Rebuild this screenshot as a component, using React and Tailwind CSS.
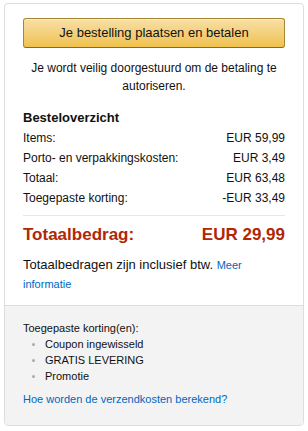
import React from 'react';

const rows = [
  { label: 'Items:', value: 'EUR 59,99' },
  { label: 'Porto- en verpakkingskosten:', value: 'EUR 3,49' },
  { label: 'Totaal:', value: 'EUR 63,48' },
  { label: 'Toegepaste korting:', value: '-EUR 33,49' },
];

const discounts = ['Coupon ingewisseld', 'GRATIS LEVERING', 'Promotie'];

const App = () => {
  return (
    <div className="pl-[4px] pt-[3px] font-['Liberation_Sans',Arial,sans-serif] text-[#111]">
      <div className="w-[300px] rounded-[4px] border border-[#dddddd] bg-white">
        {/* bestelling plaatsen */}
        <div className="px-[18px] pt-[14px] pb-[12px]">
          <button className="block h-[30px] w-full rounded-[3px] border border-[#a88734] border-b-[#846a29] bg-gradient-to-b from-[#f7dfa5] to-[#f0c14b] text-[13px] leading-[28px] text-[#111] shadow-[inset_0_1px_0_rgba(255,255,255,0.4)]">
            Je bestelling plaatsen en betalen
          </button>
          <p className="mt-[11px] text-center text-[12px] leading-[18px]">
            Je wordt veilig doorgestuurd om de betaling te autoriseren.
          </p>

          {/* overzicht */}
          <h3 className="mt-[13px] text-[13px] font-bold leading-[20px]">Besteloverzicht</h3>
          <div>
            {rows.map((row) => (
              <div key={row.label} className="flex justify-between text-[12px] leading-[20px]">
                <span>{row.label}</span>
                <span>{row.value}</span>
              </div>
            ))}
          </div>
          <div className="mt-[7px] h-px bg-[#e7e7e7]" />
          <div className="mt-[7px] flex justify-between text-[17px] font-bold leading-[24px] text-[#B12704]">
            <span>Totaalbedrag:</span>
            <span>EUR 29,99</span>
          </div>
          <p className="mt-[8px] text-[13px] leading-[19px]">
            Totaalbedragen zijn inclusief btw.{' '}
            <a href="#" className="text-[11px] leading-[13px] text-[#0066c0]">Meer informatie</a>
          </p>
        </div>

        {/* kortingen */}
        <div className="rounded-b-[4px] border-t border-[#dddddd] bg-[#f3f3f3] px-[18px] pt-[14px] pb-[18px] text-[11px] leading-[16px]">
          <div>Toegepaste korting(en):</div>
          <ul>
            {discounts.map((d) => (
              <li key={d} className="flex items-center">
                <span className="ml-[9px] mr-[10px] h-[3px] w-[3px] rounded-full bg-[#aaaaaa]" />
                <span>{d}</span>
              </li>
            ))}
          </ul>
          <a href="#" className="mt-[7px] block text-[#0066c0]">
            Hoe worden de verzendkosten berekend?
          </a>
        </div>
      </div>
    </div>
  );
};

export default App;
